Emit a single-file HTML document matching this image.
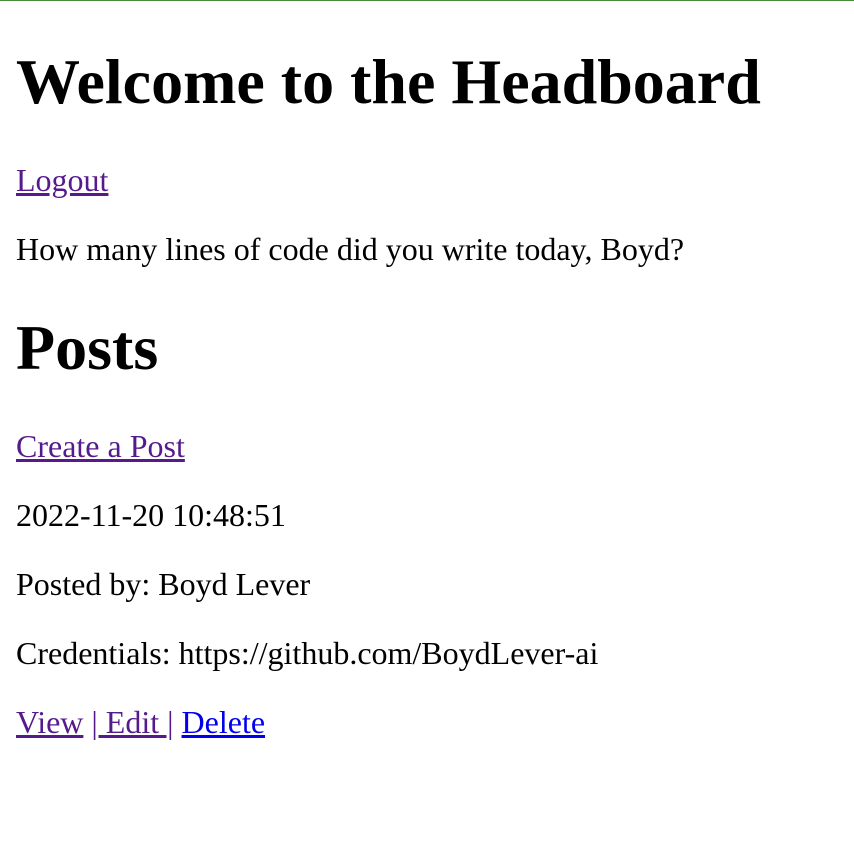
<!DOCTYPE html>
<html><head><meta charset="utf-8"><style>
html,body{margin:0;padding:0;background:#fff;}
body{margin:16px;font-family:"Liberation Serif",serif;font-size:32px;color:#000;}
h1{font-size:64px;margin:43px 0;font-weight:bold;line-height:74px;}
h1.first{margin-top:45px;}
p{margin:32px 0;line-height:37px;}
a{color:#551a8b;text-decoration:underline;}
a.b{color:#0000ee;}
#top{position:absolute;left:0;top:0;width:854px;height:1px;background:#4a8a3a;}
</style></head><body>
<div id="top"></div>
<h1 class="first">Welcome to the Headboard</h1>
<p><a href="#">Logout</a></p>
<p>How many lines of code did you write today, Boyd?</p>
<h1>Posts</h1>
<p><a href="#">Create a Post</a></p>
<p>2022-11-20 10:48:51</p>
<p>Posted by: Boyd Lever</p>
<p>Credentials: https://github.com/BoydLever-ai</p>
<p><a href="#">View</a> <a href="#">| Edit |</a> <a class="b" href="#">Delete</a></p>
</body></html>
